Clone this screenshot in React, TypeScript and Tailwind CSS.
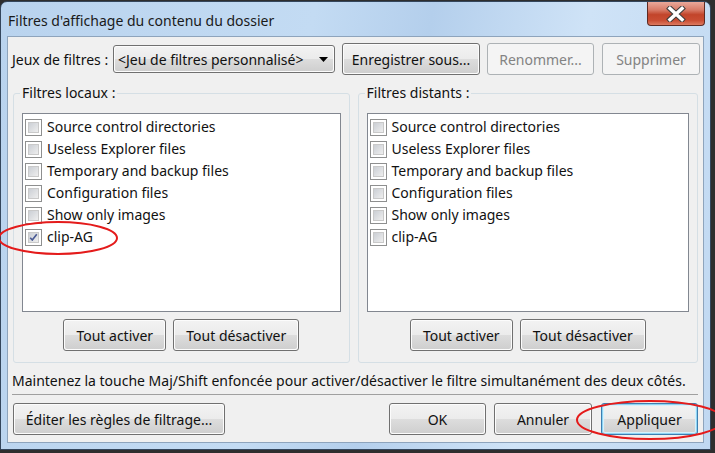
import React from "react";

const FONT = { fontFamily: '"Noto Sans", "Open Sans", sans-serif' };

function Btn({
  children,
  w,
  disabled,
  focused,
}: {
  children: React.ReactNode;
  w: string;
  disabled?: boolean;
  focused?: boolean;
}) {
  if (disabled) {
    return (
      <div
        className={`${w} h-[32px] rounded-[3px] border border-[#adb2b5] bg-[#f4f4f4] flex items-center justify-center text-[#838383] text-[14px]`}
      >
        {children}
      </div>
    );
  }
  return (
    <div
      className={`${w} h-[32px] rounded-[3px] border ${
        focused ? "border-[#3c7fb1] bg-[#8fd4f3] p-[1px]" : "border-[#707070] bg-[#fcfcfc] p-[1px]"
      }`}
    >
      <div
        className={`w-full h-full rounded-[2px] flex items-center justify-center text-[14px] text-[#111] bg-[linear-gradient(#f2f2f2_0%,#ebebeb_50%,#dddddd_50%,#cfcfcf_100%)] ${
          focused ? "shadow-[inset_0_0_0_1px_#d4f1fd]" : ""
        }`}
      >
        {children}
      </div>
    </div>
  );
}

function Check({ checked }: { checked?: boolean }) {
  return (
    <div className="w-[17px] h-[17px] border border-[#8e8f8f] bg-white p-[2px] shrink-0">
      <div className="w-full h-full border border-[#c9c9c9] bg-[linear-gradient(135deg,#cbcfd5_0%,#eeeeee_100%)] relative flex items-center justify-center">
        {checked && (
          <svg width="11" height="11" viewBox="0 0 11 11">
            <path
              d="M1.5 5.8 L4 8.6 L9.5 1.5"
              fill="none"
              stroke="#4a5a94"
              strokeWidth="2"
              strokeLinejoin="round"
            />
          </svg>
        )}
      </div>
    </div>
  );
}

const items = [
  "Source control directories",
  "Useless Explorer files",
  "Temporary and backup files",
  "Configuration files",
  "Show only images",
  "clip-AG",
];

function Group({
  title,
  w,
  checkedLast,
}: {
  title: string;
  w: string;
  checkedLast?: boolean;
}) {
  return (
    <div
      className={`${w} h-[270px] relative border border-[#d5dfe5] rounded-[3px] pt-[19px] px-[8px] pb-[10px] flex flex-col`}
    >
      <span className="absolute left-[6px] top-[-11px] px-[2px] bg-[#f0f0f0] text-[14px] leading-[20px] text-[#111]">
        {title}
      </span>
      <div className="h-[199px] border border-[#828790] bg-white pt-[2px] pl-[2px] flex flex-col">
        {items.map((it, i) => (
          <div key={it} className="h-[22px] flex items-center gap-[5px]">
            <Check checked={checkedLast && i === items.length - 1} />
            <span className="text-[14px] text-[#111] leading-[20px]">{it}</span>
          </div>
        ))}
      </div>
      <div className="mt-[7px] flex justify-center gap-[7px]">
        <Btn w="w-[103px]">Tout activer</Btn>
        <Btn w="w-[126px]">Tout désactiver</Btn>
      </div>
    </div>
  );
}

export default function App() {
  return (
    <div
      className="w-[715px] h-[453px] bg-[#2e2e2e] overflow-hidden relative pt-[1px]"
      style={FONT}
    >
      <div className="w-[711px] h-[449px] rounded-t-[7px] border border-[#34465c] bg-[linear-gradient(100deg,#b9d3ee_0%,#c3dbf3_40%,#b4cfec_55%,#cfe3f7_75%,#c0d8f1_100%)] flex flex-col px-[6px] pb-[6px]">
        <div className="h-[34px] flex justify-between shrink-0">
          <div className="pl-[1px] pt-[9px] text-[14px] leading-[20px] text-[#1a1a1a]">
            Filtres d'affichage du contenu du dossier
          </div>
          <div className="w-[58px] h-[24px] mr-[-1px] rounded-b-[4px] border border-t-0 border-[#5e2a22] bg-[linear-gradient(#e9a99b_0%,#d77a66_35%,#c2452b_55%,#c94d33_80%,#dd7a60_100%)] flex items-center justify-center">
            <svg width="22" height="16" viewBox="0 0 22 16">
              <path
                d="M5 2.5 L17 13.5 M17 2.5 L5 13.5"
                stroke="#3b3b3b"
                strokeWidth="5.5"
                strokeLinecap="square"
              />
              <path
                d="M5 2.5 L17 13.5 M17 2.5 L5 13.5"
                stroke="#ffffff"
                strokeWidth="3.5"
                strokeLinecap="square"
              />
            </svg>
          </div>
        </div>
        <div className="flex-1 bg-[#f0f0f0] border border-[#8ea4bc] pt-[6px] px-[5px] flex flex-col text-[#111]">
          <div className="h-[32px] flex items-center">
            <span className="w-[101px] text-[14px] -ml-[1px] shrink-0">Jeux de filtres :</span>
            <div className="w-[222px] h-[28px] rounded-[3px] border border-[#707070] p-[1px] bg-[#fcfcfc] shrink-0">
              <div className="w-full h-full rounded-[2px] bg-[linear-gradient(#f2f2f2_0%,#ebebeb_50%,#dddddd_50%,#cfcfcf_100%)] flex items-center justify-between pl-[3px] pr-[5px] text-[14px]">
                <span>&lt;Jeu de filtres personnalisé&gt;</span>
                <svg width="9" height="5" viewBox="0 0 9 5">
                  <path d="M0 0 H9 L4.5 5 Z" fill="#000" />
                </svg>
              </div>
            </div>
            <div className="ml-[7px]">
              <Btn w="w-[138px]">Enregistrer sous...</Btn>
            </div>
            <div className="ml-[7px]">
              <Btn w="w-[107px]" disabled>
                Renommer...
              </Btn>
            </div>
            <div className="ml-[8px]">
              <Btn w="w-[98px]" disabled>
                Supprimer
              </Btn>
            </div>
          </div>
          <div className="mt-[18px] flex gap-[8px]">
            <Group title="Filtres locaux :" w="w-[337px]" checkedLast />
            <Group title="Filtres distants :" w="w-[341px]" />
          </div>
          <div className="h-[30px] flex items-center text-[14px] -ml-[1px] pt-[5px]">
            Maintenez la touche Maj/Shift enfoncée pour activer/désactiver le filtre simultanément des deux côtés.
          </div>
          <div className="h-px bg-[#a0a0a0] mt-[1px] -ml-[1px]" />
          <div className="mt-[8px] flex items-center">
            <Btn w="w-[212px]">Éditer les règles de filtrage...</Btn>
            <div className="flex-1" />
            <Btn w="w-[97px]">OK</Btn>
            <div className="ml-[8px]">
              <Btn w="w-[98px]">Annuler</Btn>
            </div>
            <div className="ml-[9px]">
              <Btn w="w-[97px]" focused>
                Appliquer
              </Btn>
            </div>
          </div>
        </div>
      </div>
      <svg
        className="absolute left-0 top-0 pointer-events-none"
        width="715"
        height="453"
      >
        <ellipse cx="58" cy="238" rx="59" ry="16" fill="none" stroke="#e41b1b" strokeWidth="2" />
        <ellipse cx="650" cy="420" rx="73" ry="19" fill="none" stroke="#e41b1b" strokeWidth="2" />
      </svg>
    </div>
  );
}
